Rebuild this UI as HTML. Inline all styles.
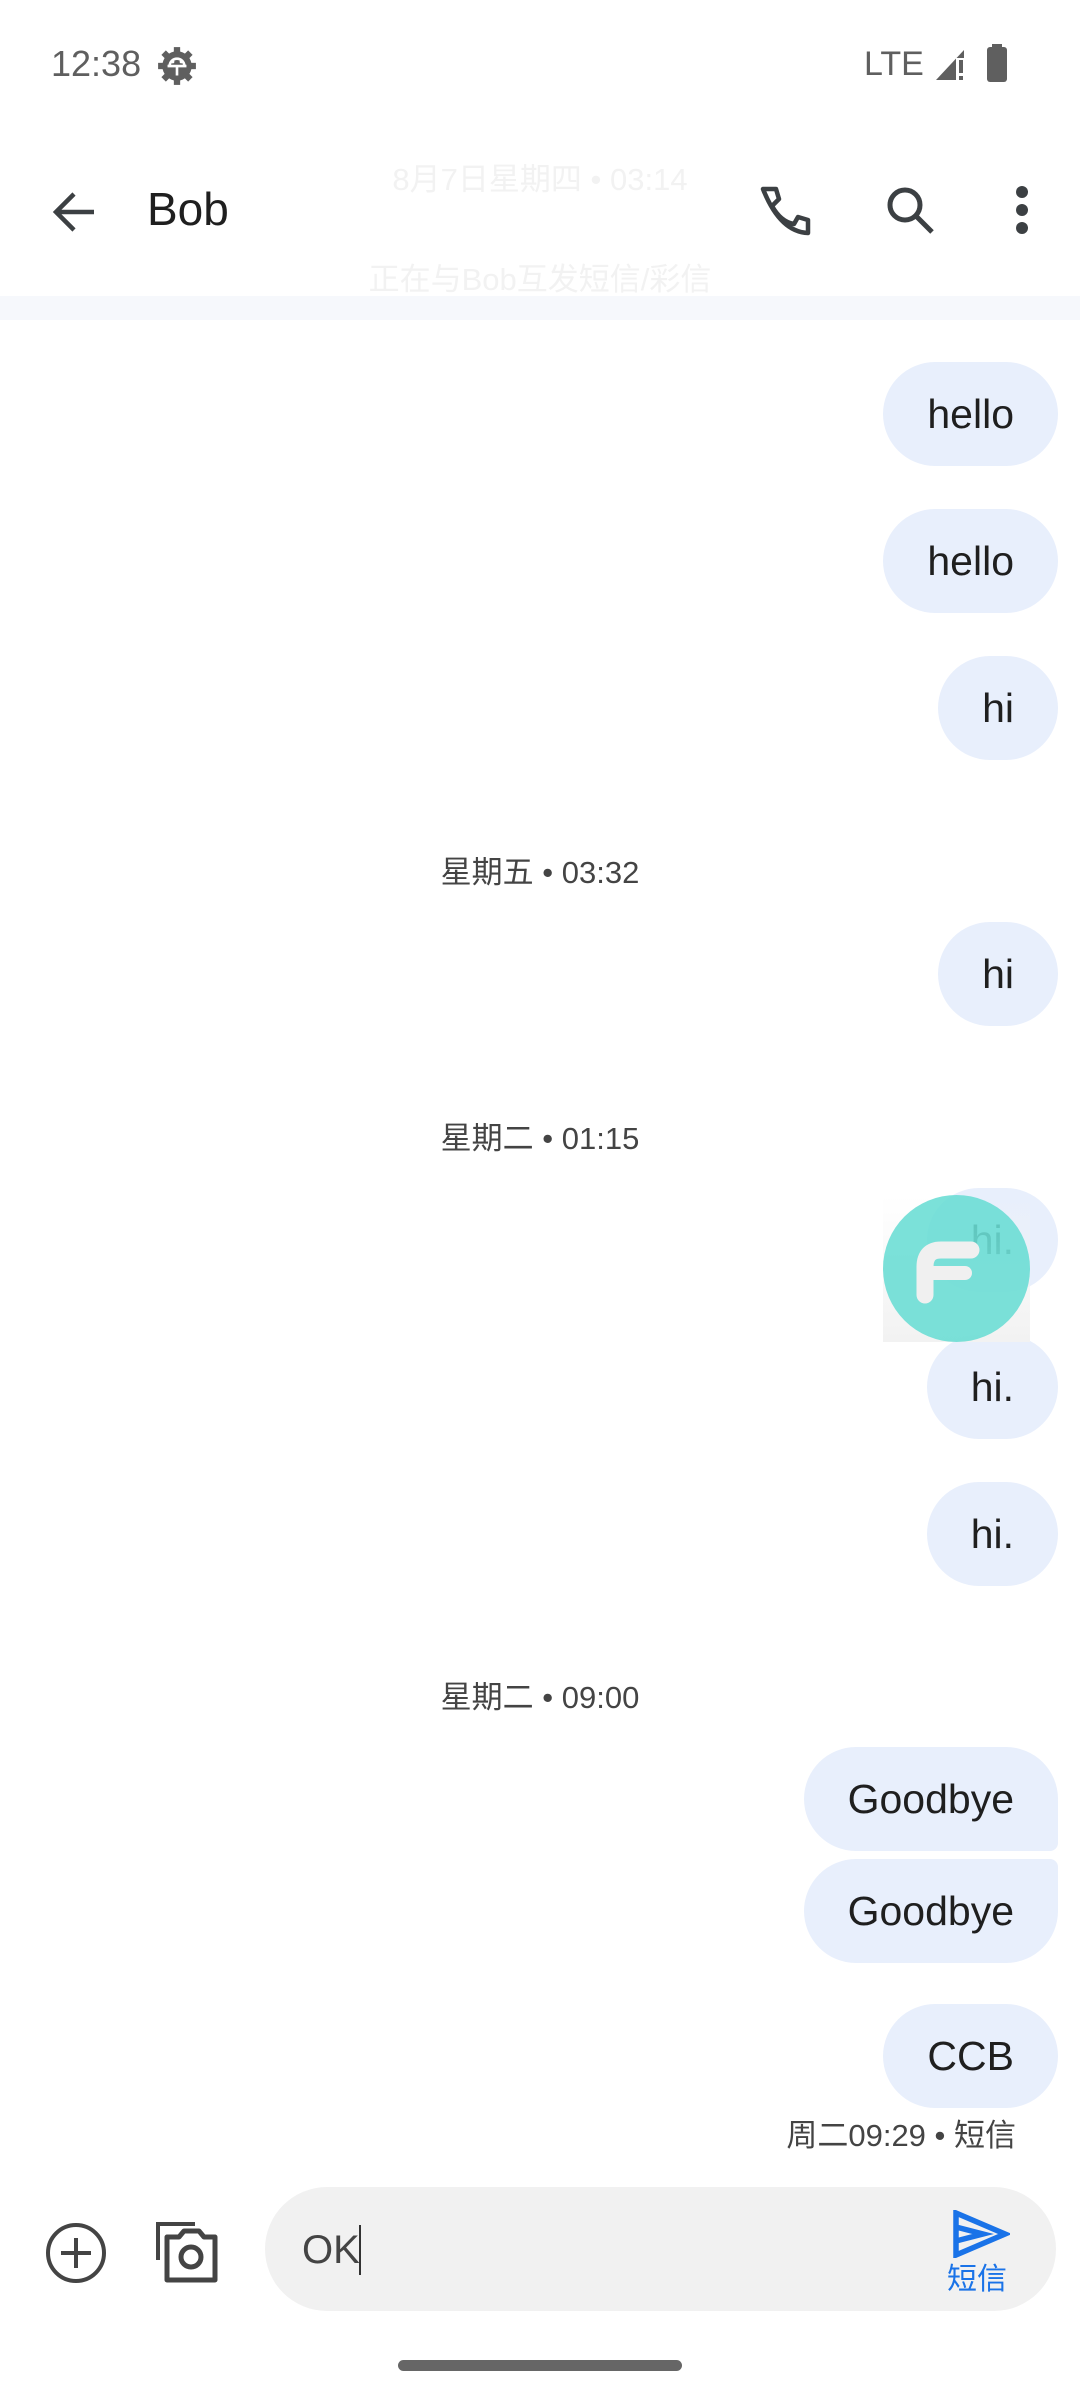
<!DOCTYPE html>
<html><head><meta charset="utf-8">
<style>
*{margin:0;padding:0;box-sizing:border-box}
body{width:1080px;height:2400px;background:#fff;position:relative;overflow:hidden;font-family:"Liberation Sans","Noto Sans CJK SC",sans-serif;color:#1f1f1f}
.a{position:absolute}
.b{position:absolute;right:22px;height:104px;background:#e8effc;border-radius:52px;font-size:41px;line-height:104px;padding:0 44px;color:#1f1f1f;white-space:nowrap}
.d{position:absolute;left:0;width:1080px;text-align:center;font-size:31px;color:#444}
</style></head><body>
<div class="a" style="left:51px;top:43px;font-size:36px;color:#5f5f5f">12:38</div>
<svg class="a" style="left:156px;top:45px" width="42" height="42" viewBox="0 0 40 40">
<g fill="#5f5f5f"><circle cx="20" cy="20" r="14"/><g>
<rect x="17" y="2" width="6" height="6"/><rect x="17" y="32" width="6" height="6"/><rect x="2" y="17" width="6" height="6"/><rect x="32" y="17" width="6" height="6"/>
<rect x="17" y="2" width="6" height="6" transform="rotate(45 20 20)"/><rect x="17" y="32" width="6" height="6" transform="rotate(45 20 20)"/><rect x="2" y="17" width="6" height="6" transform="rotate(45 20 20)"/><rect x="32" y="17" width="6" height="6" transform="rotate(45 20 20)"/></g></g>
<path d="M11 20h18M20 20v9M13 20a7 7 0 0 1 14 0" stroke="#fff" stroke-width="2.5" fill="none"/>
<circle cx="16" cy="16" r="1.5" fill="#fff"/><circle cx="24" cy="16" r="1.5" fill="#fff"/></svg>
<div class="a" style="left:864px;top:45px;font-size:34px;color:#5f5f5f">LTE</div>
<svg class="a" style="left:934px;top:44px" width="36" height="38" viewBox="0 0 36 38"><path d="M2 36L30 6V36Z" fill="#5f5f5f"/><rect x="22" y="14" width="10" height="24" fill="#fff"/><rect x="25" y="16" width="4" height="13" fill="#5f5f5f"/><rect x="25" y="32" width="4" height="4" fill="#5f5f5f"/></svg>
<svg class="a" style="left:986px;top:44px" width="22" height="38" viewBox="0 0 22 38"><rect x="6" y="0" width="10" height="5" fill="#5f5f5f"/><rect x="1" y="3" width="20" height="35" rx="3" fill="#5f5f5f"/></svg>

<div class="d" style="top:154px;color:#f2f2f2;font-size:31px">8月7日星期四 • 03:14</div>
<div class="d" style="top:254px;color:#f2f2f2;font-size:31px">正在与Bob互发短信/彩信</div>
<div class="a" style="left:0;top:296px;width:1080px;height:24px;background:#f6f8fc"></div>

<svg class="a" style="left:50px;top:188px" width="48" height="48" viewBox="0 0 48 48"><path d="M44 24H8M24 6L6 24L24 42" stroke="#3c4043" stroke-width="4.5" fill="none"/></svg>
<div class="a" style="left:147px;top:182px;font-size:46px;color:#1f1f1f">Bob</div>
<svg class="a" style="left:758px;top:184px" width="54" height="54" viewBox="0 0 54 54"><path d="M5 5H18L21 15L14 22Q23 38 36 40L40 33L50 36V49Q22 48 5 5Z" stroke="#3c4043" stroke-width="4.5" fill="none" stroke-linejoin="round"/></svg>
<svg class="a" style="left:884px;top:184px" width="54" height="54" viewBox="0 0 54 54"><circle cx="21" cy="21" r="15" stroke="#3c4043" stroke-width="5" fill="none"/><path d="M32 32L48 48" stroke="#3c4043" stroke-width="5"/></svg>
<svg class="a" style="left:1010px;top:185px" width="24" height="50" viewBox="0 0 24 50"><g fill="#3c4043"><circle cx="12" cy="7" r="6"/><circle cx="12" cy="25" r="6"/><circle cx="12" cy="43" r="6"/></g></svg>

<div class="b" style="top:362px">hello</div>
<div class="b" style="top:509px">hello</div>
<div class="b" style="top:656px">hi</div>
<div class="d" style="top:847px">星期五 • 03:32</div>
<div class="b" style="top:922px">hi</div>
<div class="d" style="top:1113px">星期二 • 01:15</div>
<div class="b" style="top:1188px">hi.</div>
<div class="b" style="top:1335px">hi.</div>
<div class="b" style="top:1482px">hi.</div>
<div class="d" style="top:1672px">星期二 • 09:00</div>
<div class="b" style="top:1747px;border-bottom-right-radius:8px">Goodbye</div>
<div class="b" style="top:1859px;border-top-right-radius:8px">Goodbye</div>
<div class="b" style="top:2004px">CCB</div>
<div class="a" style="right:64px;top:2110px;font-size:31px;color:#444">周二09:29 • 短信</div>

<div class="a" style="left:883px;top:1195px;width:147px;height:147px;background:linear-gradient(#fff0,#f2f2f2)"></div>
<div class="a" style="left:883px;top:1195px;width:147px;height:147px;border-radius:50%;background:rgba(100,220,210,0.85)"></div>
<svg class="a" style="left:883px;top:1195px" width="147" height="147" viewBox="0 0 147 147"><path d="M42 100V72Q42 55 58 55H88" stroke="#f0f0f0" stroke-width="17" fill="none" stroke-linecap="round"/><path d="M50 78H82" stroke="#f0f0f0" stroke-width="14" stroke-linecap="round"/></svg>

<svg class="a" style="left:44px;top:2221px" width="64" height="64" viewBox="0 0 64 64"><circle cx="32" cy="32" r="28" stroke="#444" stroke-width="4" fill="none"/><path d="M32 17V47M17 32H47" stroke="#444" stroke-width="4"/></svg>
<svg class="a" style="left:155px;top:2220px" width="64" height="64" viewBox="0 0 64 64"><path d="M3 40V4H40" stroke="#444" stroke-width="4" fill="none"/><path d="M12 17H24L29 11H44L49 17H60V60H12Z" stroke="#444" stroke-width="5" fill="none" stroke-linejoin="round"/><circle cx="36" cy="37" r="10" stroke="#444" stroke-width="5" fill="none"/></svg>
<div class="a" style="left:265px;top:2187px;width:791px;height:124px;background:#f1f1f1;border-radius:62px"></div>
<div class="a" style="left:302px;top:2228px;font-size:40px;color:#444">OK</div>
<div class="a" style="left:359px;top:2225px;width:1.5px;height:50px;background:#333"></div>
<svg class="a" style="left:950px;top:2210px" width="60" height="48" viewBox="0 0 60 48"><path d="M6 3L55 24L6 45Z M6 17L33 24L6 31" stroke="#1a73e8" stroke-width="5.5" fill="none" stroke-linejoin="miter"/></svg>
<div class="a" style="left:947px;top:2254px;font-size:30px;color:#1a73e8">短信</div>
<div class="a" style="left:398px;top:2360px;width:284px;height:11px;border-radius:6px;background:#666"></div>
</body></html>
